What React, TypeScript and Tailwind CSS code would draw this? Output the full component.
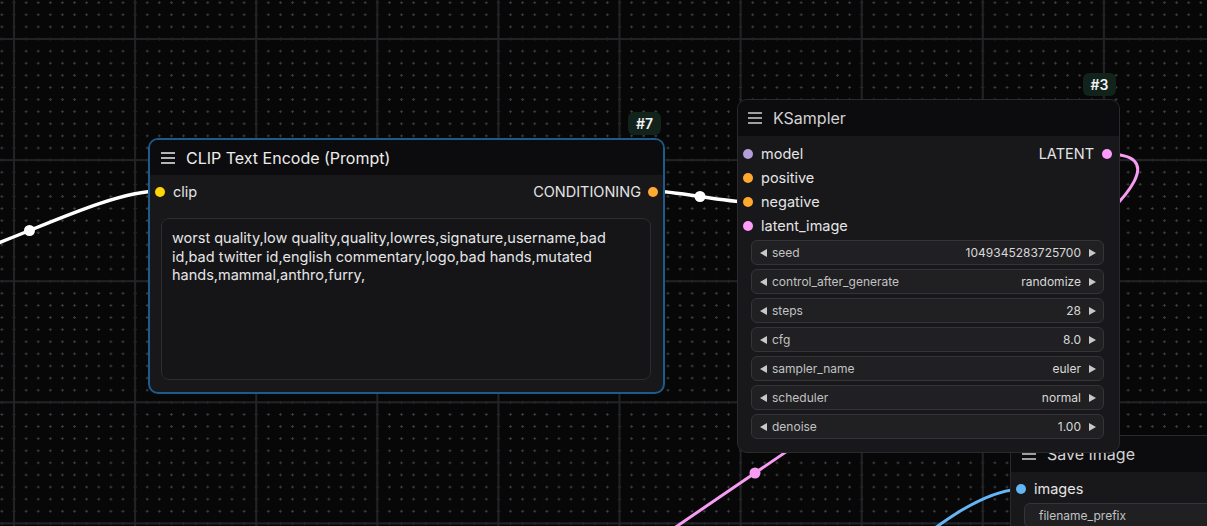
import React from "react";

type Tone = "bright" | "dim";

function Hamburger({ tone = "dim" }: { tone?: Tone }) {
  const c = tone === "bright" ? "#ececec" : "#cfcfcf";
  return (
    <svg width="14" height="12" viewBox="0 0 14 12" className="shrink-0">
      <path d="M0 1h14M0 6h14M0 11h14" stroke={c} strokeWidth="1.6" />
    </svg>
  );
}

function Tri({ dir }: { dir: "left" | "right" }) {
  return (
    <svg width="7" height="8" viewBox="0 0 7 8" className="shrink-0">
      <polygon points={dir === "left" ? "7,0 7,8 0,4" : "0,0 0,8 7,4"} fill="#c8c8c8" />
    </svg>
  );
}

function Dot({ color }: { color: string }) {
  return <span className="h-[10px] w-[10px] shrink-0 rounded-full" style={{ backgroundColor: color }} />;
}

function Title({ text, tone }: { text: string; tone: Tone }) {
  return (
    <div className="flex h-[35px] items-center gap-[11px] bg-[#0c0c0e] pl-[11px]">
      <Hamburger tone={tone} />
      <span className={tone === "bright" ? "text-[16px] text-[#ececec]" : "text-[16px] text-[#d2d2d2]"}>{text}</span>
    </div>
  );
}

function InSlot({ color, label }: { color: string; label: string }) {
  return (
    <div className="flex h-[24px] items-center gap-[8px] pl-[5px]">
      <Dot color={color} />
      <span className="text-[14.5px] text-[#e4e4e4]">{label}</span>
    </div>
  );
}

function NumWidget({ label, value }: { label: string; value: string }) {
  return (
    <div className="flex h-[25px] items-center rounded-[6px] border border-[#34343a] bg-[#202023] pl-[8px] pr-[7px] text-[12px]">
      <Tri dir="left" />
      <span className="ml-[5px] text-[#c2c2c2]">{label}</span>
      <span className="ml-auto mr-[8px] text-[#d8d8d8]">{value}</span>
      <Tri dir="right" />
    </div>
  );
}

function Badge({ text, className }: { text: string; className: string }) {
  return (
    <div
      className={`absolute flex h-[23px] w-[33px] items-center justify-center rounded-[6px] bg-[#11231a] text-[14px] font-semibold text-[#f2f2f2] ${className}`}
    >
      {text}
    </div>
  );
}

const widgets: [string, string][] = [
  ["seed", "1049345283725700"],
  ["control_after_generate", "randomize"],
  ["steps", "28"],
  ["cfg", "8.0"],
  ["sampler_name", "euler"],
  ["scheduler", "normal"],
  ["denoise", "1.00"],
];

function Canvas() {
  const m = 12.11;
  return (
    <svg className="absolute inset-0" width={1207} height={526}>
      <defs>
        <pattern id="minor" x={14 - m / 2} y={39 - m / 2} width={m} height={m} patternUnits="userSpaceOnUse">
          <path d={`M${m / 2 - 1.5} ${m / 2}h3M${m / 2} ${m / 2 - 1.5}v3`} stroke="#3d3e44" strokeWidth="1" />
        </pattern>
        <pattern id="major" x={13} y={38} width={121.1} height={121.1} patternUnits="userSpaceOnUse">
          <path d="M1 0v121.1M0 1h121.1" stroke="#212327" strokeWidth="2" />
        </pattern>
      </defs>
      <rect width="100%" height="100%" fill="url(#minor)" />
      <rect width="100%" height="100%" fill="url(#major)" />

      {/* clip link */}
      <path d="M-101 270 C-33 270, 92 191, 160 191" stroke="#ffffff" strokeWidth="3.5" fill="none" />
      <circle cx="29.5" cy="230.5" r="5.5" fill="#ffffff" />
      {/* conditioning -> negative */}
      <path d="M652 191 C676 191, 724 202, 748 202" stroke="#ffffff" strokeWidth="3.5" fill="none" />
      <circle cx="700" cy="196.5" r="5.5" fill="#ffffff" />
      {/* latent link */}
      <path d="M1106 154 C1343 154, 167 792, 404 792" stroke="#f79cf3" strokeWidth="3" fill="none" />
      <circle cx="755" cy="473" r="5.5" fill="#f79cf3" />
      {/* images link */}
      <path d="M740 650 C821 650, 941 489, 1022 489" stroke="#64b5f6" strokeWidth="3" fill="none" />
    </svg>
  );
}

export default function App() {
  return (
    <div className="relative h-[526px] w-[1207px] overflow-hidden bg-[#070707] font-[Inter,sans-serif]">
      <Canvas />

      {/* CLIP Text Encode */}
      <div className="absolute left-[148px] top-[138px] flex w-[517px] flex-col overflow-hidden rounded-[10px] border-2 border-[#1d5b8c] bg-[#18181b]">
        <Title text="CLIP Text Encode (Prompt)" tone="bright" />
        <div className="flex items-center justify-between pr-[5px] pt-[5px]">
          <InSlot color="#ffd500" label="clip" />
          <div className="flex items-center gap-[7px]">
            <span className="text-[14.5px] text-[#e4e4e4]">CONDITIONING</span>
            <Dot color="#ffa931" />
          </div>
        </div>
        <div className="mb-[12px] ml-[11px] mr-[12px] mt-[14px] h-[162px] rounded-[8px] border border-[#2c2c31] bg-[#151518] px-[10px] pt-[10px] text-[14.5px] leading-[18.5px] text-[#e6e6e6]">
          <div>worst quality,low quality,quality,lowres,signature,username,bad</div>
          <div>id,bad twitter id,english commentary,logo,bad hands,mutated</div>
          <div>hands,mammal,anthro,furry,</div>
        </div>
      </div>
      <Badge text="#7" className="left-[628px] top-[112px]" />

      {/* Save Image */}
      <div className="absolute left-[1010px] top-[435px] flex w-[260px] flex-col overflow-hidden rounded-[10px] border border-[#2a2a2e] bg-[#18181b]">
        <div className="flex h-[36px] items-center gap-[11px] bg-[#0c0c0e] pl-[11px]">
          <Hamburger />
          <span className="text-[16px] text-[#d2d2d2]">Save Image</span>
        </div>
        <div className="pt-[5px]">
          <InSlot color="#64b5f6" label="images" />
        </div>
        <div className="ml-[13px] mt-[2px] flex h-[25px] items-center rounded-[6px] border border-[#34343a] bg-[#202023] pl-[14px] text-[12px] text-[#c2c2c2]">
          filename_prefix
        </div>
        <div className="h-[40px]" />
      </div>

      {/* KSampler */}
      <div className="absolute left-[737px] top-[99px] flex w-[383px] flex-col overflow-hidden rounded-[10px] border border-[#2a2a2e] bg-[#18181b]">
        <div className="flex h-[36px] items-center gap-[11px] bg-[#0c0c0e] pl-[10px]">
          <Hamburger />
          <span className="text-[16px] text-[#d2d2d2]">KSampler</span>
        </div>
        <div className="flex justify-between pr-[7px] pt-[6px]">
          <div className="flex flex-col">
            <InSlot color="#b39ddb" label="model" />
            <InSlot color="#ffa931" label="positive" />
            <InSlot color="#ffa931" label="negative" />
            <InSlot color="#ff9cf9" label="latent_image" />
          </div>
          <div className="flex h-[24px] items-center gap-[8px]">
            <span className="text-[14.5px] text-[#e4e4e4]">LATENT</span>
            <Dot color="#ff9cf9" />
          </div>
        </div>
        <div className="mb-[13px] ml-[13px] mr-[15px] mt-[2px] flex flex-col gap-[4px]">
          {widgets.map(([l, v]) => (
            <NumWidget key={l} label={l} value={v} />
          ))}
        </div>
      </div>
      <Badge text="#3" className="left-[1083px] top-[73px]" />
    </div>
  );
}
